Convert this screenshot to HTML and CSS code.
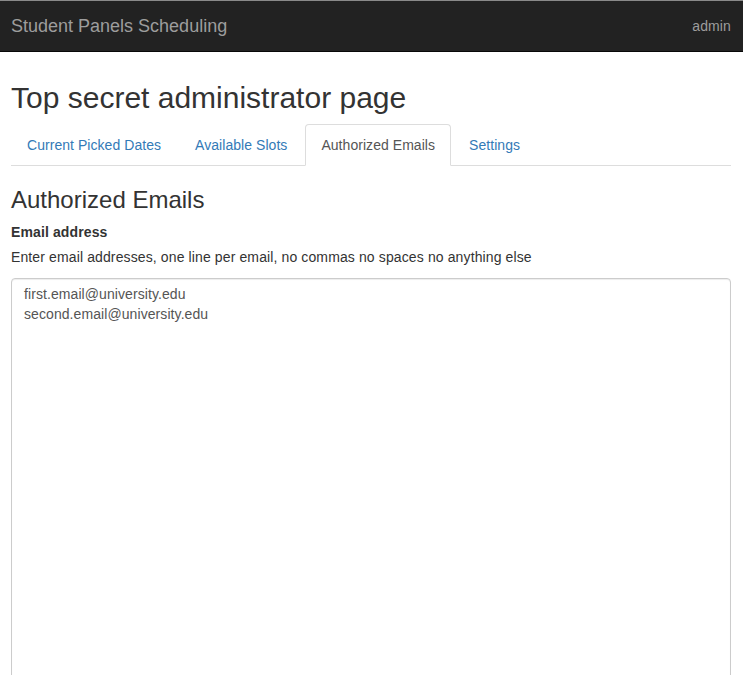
FILE: index.html
```html
<!DOCTYPE html>
<html lang="en">
<head>
<meta charset="utf-8">
<title>Student Panels Scheduling</title>
<link rel="stylesheet" href="styles.css">
</head>
<body>
<nav class="navbar">
  <div class="wrap navbar-inner">
    <a class="brand" href="#">Student Panels Scheduling</a>
    <a class="nav-user" href="#">admin</a>
  </div>
</nav>
<main class="wrap page">
  <h1 class="page-title">Top secret administrator page</h1>
  <ul class="tabs">
    <li class="tab"><a href="#">Current Picked Dates</a></li>
    <li class="tab"><a href="#">Available Slots</a></li>
    <li class="tab active"><a href="#">Authorized Emails</a></li>
    <li class="tab"><a href="#">Settings</a></li>
  </ul>
  <section class="tab-content">
    <h2 class="section-title">Authorized Emails</h2>
    <label class="field-label" for="emails">Email address</label>
    <p class="help">Enter email addresses, one line per email, no commas no spaces no anything else</p>
    <textarea id="emails" class="form-control">first.email@university.edu
second.email@university.edu</textarea>
  </section>
</main>
</body>
</html>
```
FILE: styles.css
```css
* { box-sizing: border-box; }
html, body { margin: 0; padding: 0; }
body {
  font-family: "Liberation Sans", Arial, Helvetica, sans-serif;
  font-size: 14px;
  line-height: 1.428571;
  letter-spacing: 0.12px;
  color: #333;
  background: #fff;
  overflow: hidden;
}
a { text-decoration: none; }
.wrap {
  padding-left: 11px;
  padding-right: 12px;
}
.navbar {
  background: #222;
  border-top: 1px solid #8a8a8a;
  border-bottom: 1px solid #080808;
}
.navbar-inner {
  display: flex;
  justify-content: space-between;
  align-items: flex-start;
  height: 50px;
}
.brand {
  color: #9d9d9d;
  font-size: 18px;
  line-height: 20px;
  letter-spacing: 0;
  padding: 15px 0;
}
.nav-user {
  color: #9d9d9d;
  font-size: 14px;
  line-height: 20px;
  padding: 15px 0;
}
.page { padding-top: 29px; }
.page-title {
  font-size: 30px;
  font-weight: 500;
  line-height: 1.1;
  letter-spacing: 0;
  margin: 0 0 10px;
}
.tabs {
  list-style: none;
  margin: 0;
  padding: 0;
  display: flex;
  border-bottom: 1px solid #ddd;
}
.tab {
  margin-bottom: -1px;
}
.tab a {
  display: block;
  padding: 10px 15px;
  margin-right: 2px;
  line-height: 20px;
  letter-spacing: 0.05px;
  border: 1px solid transparent;
  border-radius: 4px 4px 0 0;
  color: #337ab7;
}
.tab.active a {
  color: #555;
  background: #fff;
  border-color: #ddd #ddd transparent;
}
.tab-content { padding-top: 21px; }
.section-title {
  font-size: 24px;
  font-weight: 500;
  line-height: 1.1;
  letter-spacing: 0;
  margin: 0 0 10px;
}
.field-label {
  display: inline-block;
  font-weight: 700;
  margin-bottom: 5px;
}
.help {
  margin: 0 0 10px;
}
.form-control {
  display: block;
  width: 100%;
  height: 420px;
  padding: 6px 12px;
  font-family: inherit;
  font-size: 14px;
  line-height: 1.428571;
  letter-spacing: 0.08px;
  color: #555;
  background: #fff;
  border: 1px solid #ccc;
  border-radius: 4px;
  box-shadow: inset 0 1px 1px rgba(0,0,0,.075);
  resize: vertical;
  margin: 0;
}
```
